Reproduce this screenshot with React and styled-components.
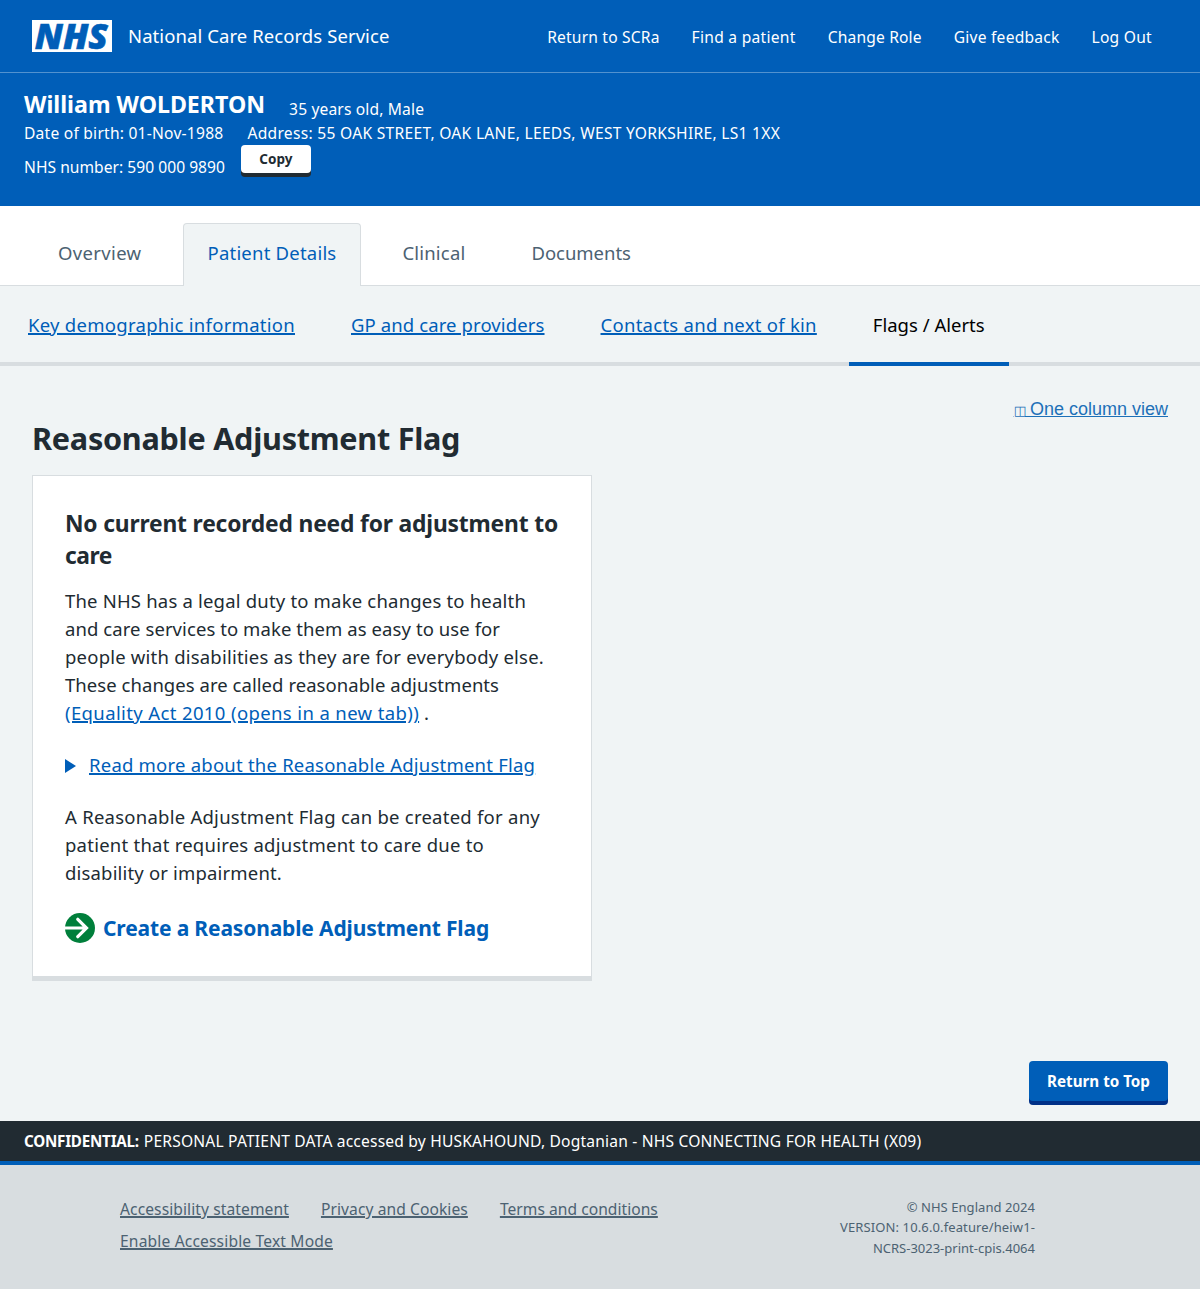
import React from "react";
import styled, { createGlobalStyle, css } from "styled-components";

const blue = "#005eb8";
const ink = "#212b32";
const slate = "#4c6272";
const rule = "#d8dde0";
const page = "#f0f4f5";

const Global = createGlobalStyle`
  *, *::before, *::after { box-sizing: border-box; }
  body {
    margin: 0;
    background: ${page};
    color: ${ink};
    font-family: "Noto Sans", "Open Sans", sans-serif;
    font-size: 18.5px;
    line-height: 28px;
  }
  h1, h2, p { margin: 0; }
  a { color: ${blue}; text-decoration-thickness: 1.5px; }
`;

const tracking = css`
  letter-spacing: ${(p) => p.$ls || 0}px;
  white-space: nowrap;
`;

const Header = styled.header`
  display: flex;
  align-items: center;
  justify-content: space-between;
  height: 73px;
  padding: 0 48px 0 32px;
  background: ${blue};
  border-bottom: 1px solid #5292cf;
`;
const Brand = styled.div`
  display: flex;
  align-items: center;
  gap: 16px;
`;
const Logo = styled.svg`
  display: block;
  width: 80px;
  height: 32px;
  overflow: visible;
`;
const ServiceName = styled.span`
  ${tracking}
  color: #fff;
`;
const TopNav = styled.nav`
  display: flex;
  gap: 32px;
  padding-top: 1px;
`;
const TopLink = styled.a`
  ${tracking}
  color: #fff;
  font-size: 15.6px;
  text-decoration: none;
`;

const Patient = styled.section`
  height: 133px;
  padding: 15px 24px 0;
  background: ${blue};
  color: #fff;
  font-size: 15.6px;
  line-height: 24px;
`;
const PatientRow = styled.div`
  display: flex;
  align-items: ${(p) => p.$align || "flex-end"};
  gap: ${(p) => p.$gap || 24}px;
`;
const PatientName = styled.h1`
  ${tracking}
  padding-bottom: 1px;
  font-size: 23.2px;
  font-weight: 700;
  line-height: 32px;
`;
const Fact = styled.span`
  ${tracking}
  padding-top: ${(p) => p.$drop || 0}px;
`;
const CopyButton = styled.button`
  ${tracking}
  width: 70px;
  height: 28px;
  padding: 0;
  border: 0;
  border-radius: 4px;
  background: #fff;
  box-shadow: 0 4px 0 ${ink};
  color: ${ink};
  font: 700 13.5px/28px "Noto Sans", sans-serif;
`;

const Tabs = styled.nav`
  display: flex;
  gap: 17px;
  height: 80px;
  padding: 17px 33.5px 0;
  background: #fff;
  border-bottom: 1px solid ${rule};
`;
const Tab = styled.a`
  ${tracking}
  height: 63px;
  padding: 15px 23.5px 0;
  border: 1px solid ${(p) => (p.$active ? rule : "transparent")};
  border-bottom: 0;
  border-radius: 4px 4px 0 0;
  background: ${(p) => (p.$active ? page : "transparent")};
  color: ${(p) => (p.$active ? blue : slate)};
  text-decoration: none;
`;

const SubNav = styled.nav`
  display: flex;
  gap: 8px;
  height: 80px;
  padding-left: 4px;
  border-bottom: 4px solid ${rule};
`;
const SubItem = styled.div`
  height: 80px;
  padding: 25px 24px 0;
  border-bottom: 4px solid ${(p) => (p.$active ? blue : "transparent")};
  color: #000;
`;
const SubLink = styled.a`
  ${tracking}
`;
const SubText = styled.span`
  ${tracking}
`;

const Main = styled.main`
  display: flex;
  flex-direction: column;
  height: 755px;
  padding: 32px 32px 16px;
`;
const ViewToggle = styled.a`
  align-self: flex-end;
  color: #1d70b8;
  font-family: "Liberation Sans", Arial, sans-serif;
  font-size: 18px;
  line-height: 22px;
  text-decoration-thickness: 1px;
`;
const ToggleGlyph = styled.span`
  font-family: "DejaVu Sans", sans-serif;
  font-size: 13px;
  font-weight: 700;
  letter-spacing: -1px;
`;
const PageTitle = styled.h1`
  ${tracking}
  margin-top: -4px;
  font-size: 30.6px;
  font-weight: 700;
  line-height: 40px;
`;
const Card = styled.section`
  width: 560px;
  height: 506px;
  margin-top: 17px;
  padding: 32px 32px 0;
  background: #fff;
  border: 1px solid ${rule};
  border-bottom-width: 5px;
`;
const CardTitle = styled.h2`
  margin-bottom: 15px;
  font-size: 22.8px;
  font-weight: 700;
  line-height: 32px;
`;
const Paragraph = styled.p`
  margin-bottom: 24px;
`;
const Line = styled.span`
  ${tracking}
  display: block;
`;
const TextLink = styled.a`
  ${tracking}
`;
const Disclosure = styled.div`
  display: flex;
  align-items: center;
  gap: 13px;
  margin-bottom: 24px;
`;
const Marker = styled.span`
  margin-top: 1px;
  border-style: solid;
  border-color: transparent;
  border-left-color: ${blue};
  border-width: 7px 0 7px 11px;
`;
const Action = styled.a`
  display: flex;
  align-items: center;
  gap: 8px;
  margin-top: 26px;
  text-decoration: none;
`;
const ActionIcon = styled.svg`
  display: block;
  width: 30px;
  height: 30px;
`;
const ActionText = styled.span`
  ${tracking}
  font-size: 21px;
  font-weight: 700;
  line-height: 30px;
`;
const TopButton = styled.button`
  ${tracking}
  align-self: flex-end;
  width: 139px;
  height: 40px;
  margin: auto 0 4px;
  padding: 0;
  border: 0;
  border-radius: 4px;
  background: ${blue};
  box-shadow: 0 4px 0 #003087;
  color: #fff;
  font: 700 15.2px/40px "Noto Sans", sans-serif;
`;

const Confidential = styled.div`
  display: flex;
  gap: 5px;
  height: 40px;
  padding: 0 24px;
  background: ${ink};
  color: #fff;
  font-size: 15.6px;
  line-height: 40px;
`;
const Strong = styled.strong`
  ${tracking}
  font-size: 15.2px;
  font-weight: 700;
`;
const Footer = styled.footer`
  display: flex;
  justify-content: space-between;
  align-items: flex-start;
  height: 128px;
  padding: 28px 165px 0 120px;
  background: ${rule};
  border-top: 4px solid ${blue};
  color: ${slate};
`;
const FooterLinks = styled.nav`
  display: flex;
  flex-wrap: wrap;
  gap: 0 32px;
  width: 600px;
`;
const FooterLink = styled.a`
  ${tracking}
  color: ${slate};
  font-size: 15.6px;
  line-height: 32px;
`;
const Version = styled.div`
  padding-top: 4px;
  text-align: right;
  font-size: 13px;
  line-height: 20.4px;
`;

export default function App() {
  return (
    <>
      <Global />
      <Header>
        <Brand>
          <Logo viewBox="0 0 80 32" role="img" aria-label="NHS">
            <rect width="80" height="32" fill="#fff" />
            <text
              x="2.8"
              y="28.6"
              textLength="73"
              lengthAdjust="spacingAndGlyphs"
              fill={blue}
              stroke={blue}
              strokeWidth="0.6"
              fontFamily="Open Sans, sans-serif"
              fontWeight="800"
              fontStyle="italic"
              fontSize="35"
            >
              NHS
            </text>
          </Logo>
          <ServiceName $ls={0.08}>National Care Records Service</ServiceName>
        </Brand>
        <TopNav>
          <TopLink href="#" $ls={0.18}>Return to SCRa</TopLink>
          <TopLink href="#" $ls={0.27}>Find a patient</TopLink>
          <TopLink href="#" $ls={0.17}>Change Role</TopLink>
          <TopLink href="#" $ls={0.22}>Give feedback</TopLink>
          <TopLink href="#" $ls={0.26}>Log Out</TopLink>
        </TopNav>
      </Header>

      <Patient>
        <PatientRow $align="flex-start">
          <PatientName $ls={-0.02}>William WOLDERTON</PatientName>
          <Fact $drop={9} $ls={0.15}>35 years old, Male</Fact>
        </PatientRow>
        <PatientRow>
          <Fact $ls={0.23}>Date of birth: 01-Nov-1988</Fact>
          <Fact $ls={0.285}>Address: 55 OAK STREET, OAK LANE, LEEDS, WEST YORKSHIRE, LS1 1XX</Fact>
        </PatientRow>
        <PatientRow $align="flex-start" $gap={16}>
          <Fact $drop={10} $ls={0.03}>NHS number: 590 000 9890</Fact>
          <CopyButton $ls={0.05}>Copy</CopyButton>
        </PatientRow>
      </Patient>

      <Tabs>
        <Tab href="#" $ls={0.35}>Overview</Tab>
        <Tab href="#" $active $ls={0.21}>Patient Details</Tab>
        <Tab href="#" $ls={0.19}>Clinical</Tab>
        <Tab href="#" $ls={-0.03}>Documents</Tab>
      </Tabs>

      <SubNav>
        <SubItem><SubLink href="#" $ls={0.277}>Key demographic information</SubLink></SubItem>
        <SubItem><SubLink href="#" $ls={0.11}>GP and care providers</SubLink></SubItem>
        <SubItem><SubLink href="#" $ls={0.27}>Contacts and next of kin</SubLink></SubItem>
        <SubItem $active><SubText $ls={0.01}>Flags / Alerts</SubText></SubItem>
      </SubNav>

      <Main>
        <ViewToggle href="#"><ToggleGlyph>◫</ToggleGlyph> One column view</ViewToggle>
        <PageTitle $ls={-0.26}>Reasonable Adjustment Flag</PageTitle>
        <Card>
          <CardTitle>
            <Line $ls={-0.17}>No current recorded need for adjustment to</Line>
            <Line $ls={-0.5}>care</Line>
          </CardTitle>
          <Paragraph>
            <Line $ls={0.189}>The NHS has a legal duty to make changes to health</Line>
            <Line $ls={0.075}>and care services to make them as easy to use for</Line>
            <Line $ls={0.209}>people with disabilities as they are for everybody else.</Line>
            <Line $ls={0.048}>These changes are called reasonable adjustments</Line>
            <Line><TextLink href="#" $ls={0.376}>(Equality Act 2010 (opens in a new tab))</TextLink> .</Line>
          </Paragraph>
          <Disclosure>
            <Marker />
            <TextLink href="#" $ls={0.22}>Read more about the Reasonable Adjustment Flag</TextLink>
          </Disclosure>
          <Paragraph>
            <Line $ls={0.247}>A Reasonable Adjustment Flag can be created for any</Line>
            <Line $ls={0.24}>patient that requires adjustment to care due to</Line>
            <Line $ls={0.172}>disability or impairment.</Line>
          </Paragraph>
          <Action href="#">
            <ActionIcon viewBox="0 0 30 30" aria-hidden="true">
              <circle cx="15" cy="15" r="15" fill="#007f3b" />
              <path d="M0 15H21M12.8 6.3L21.5 15L12.8 23.7" fill="none" stroke="#fff" strokeWidth="3.2" strokeLinecap="round" />
            </ActionIcon>
            <ActionText $ls={-0.15}>Create a Reasonable Adjustment Flag</ActionText>
          </Action>
        </Card>
        <TopButton $ls={0}>Return to Top</TopButton>
      </Main>

      <Confidential>
        <Strong $ls={-0.24}>CONFIDENTIAL:</Strong>
        <Fact $ls={0.185}>
          PERSONAL PATIENT DATA accessed by HUSKAHOUND, Dogtanian - NHS CONNECTING FOR HEALTH (X09)
        </Fact>
      </Confidential>
      <Footer>
        <FooterLinks>
          <FooterLink href="#" $ls={0.088}>Accessibility statement</FooterLink>
          <FooterLink href="#" $ls={0.079}>Privacy and Cookies</FooterLink>
          <FooterLink href="#" $ls={0.032}>Terms and conditions</FooterLink>
          <FooterLink href="#" $ls={0.159}>Enable Accessible Text Mode</FooterLink>
        </FooterLinks>
        <Version>
          <Line $ls={0.06}>© NHS England 2024</Line>
          <Line $ls={0.12}>VERSION: 10.6.0.feature/heiw1-</Line>
          <Line>NCRS-3023-print-cpis.4064</Line>
        </Version>
      </Footer>
    </>
  );
}
